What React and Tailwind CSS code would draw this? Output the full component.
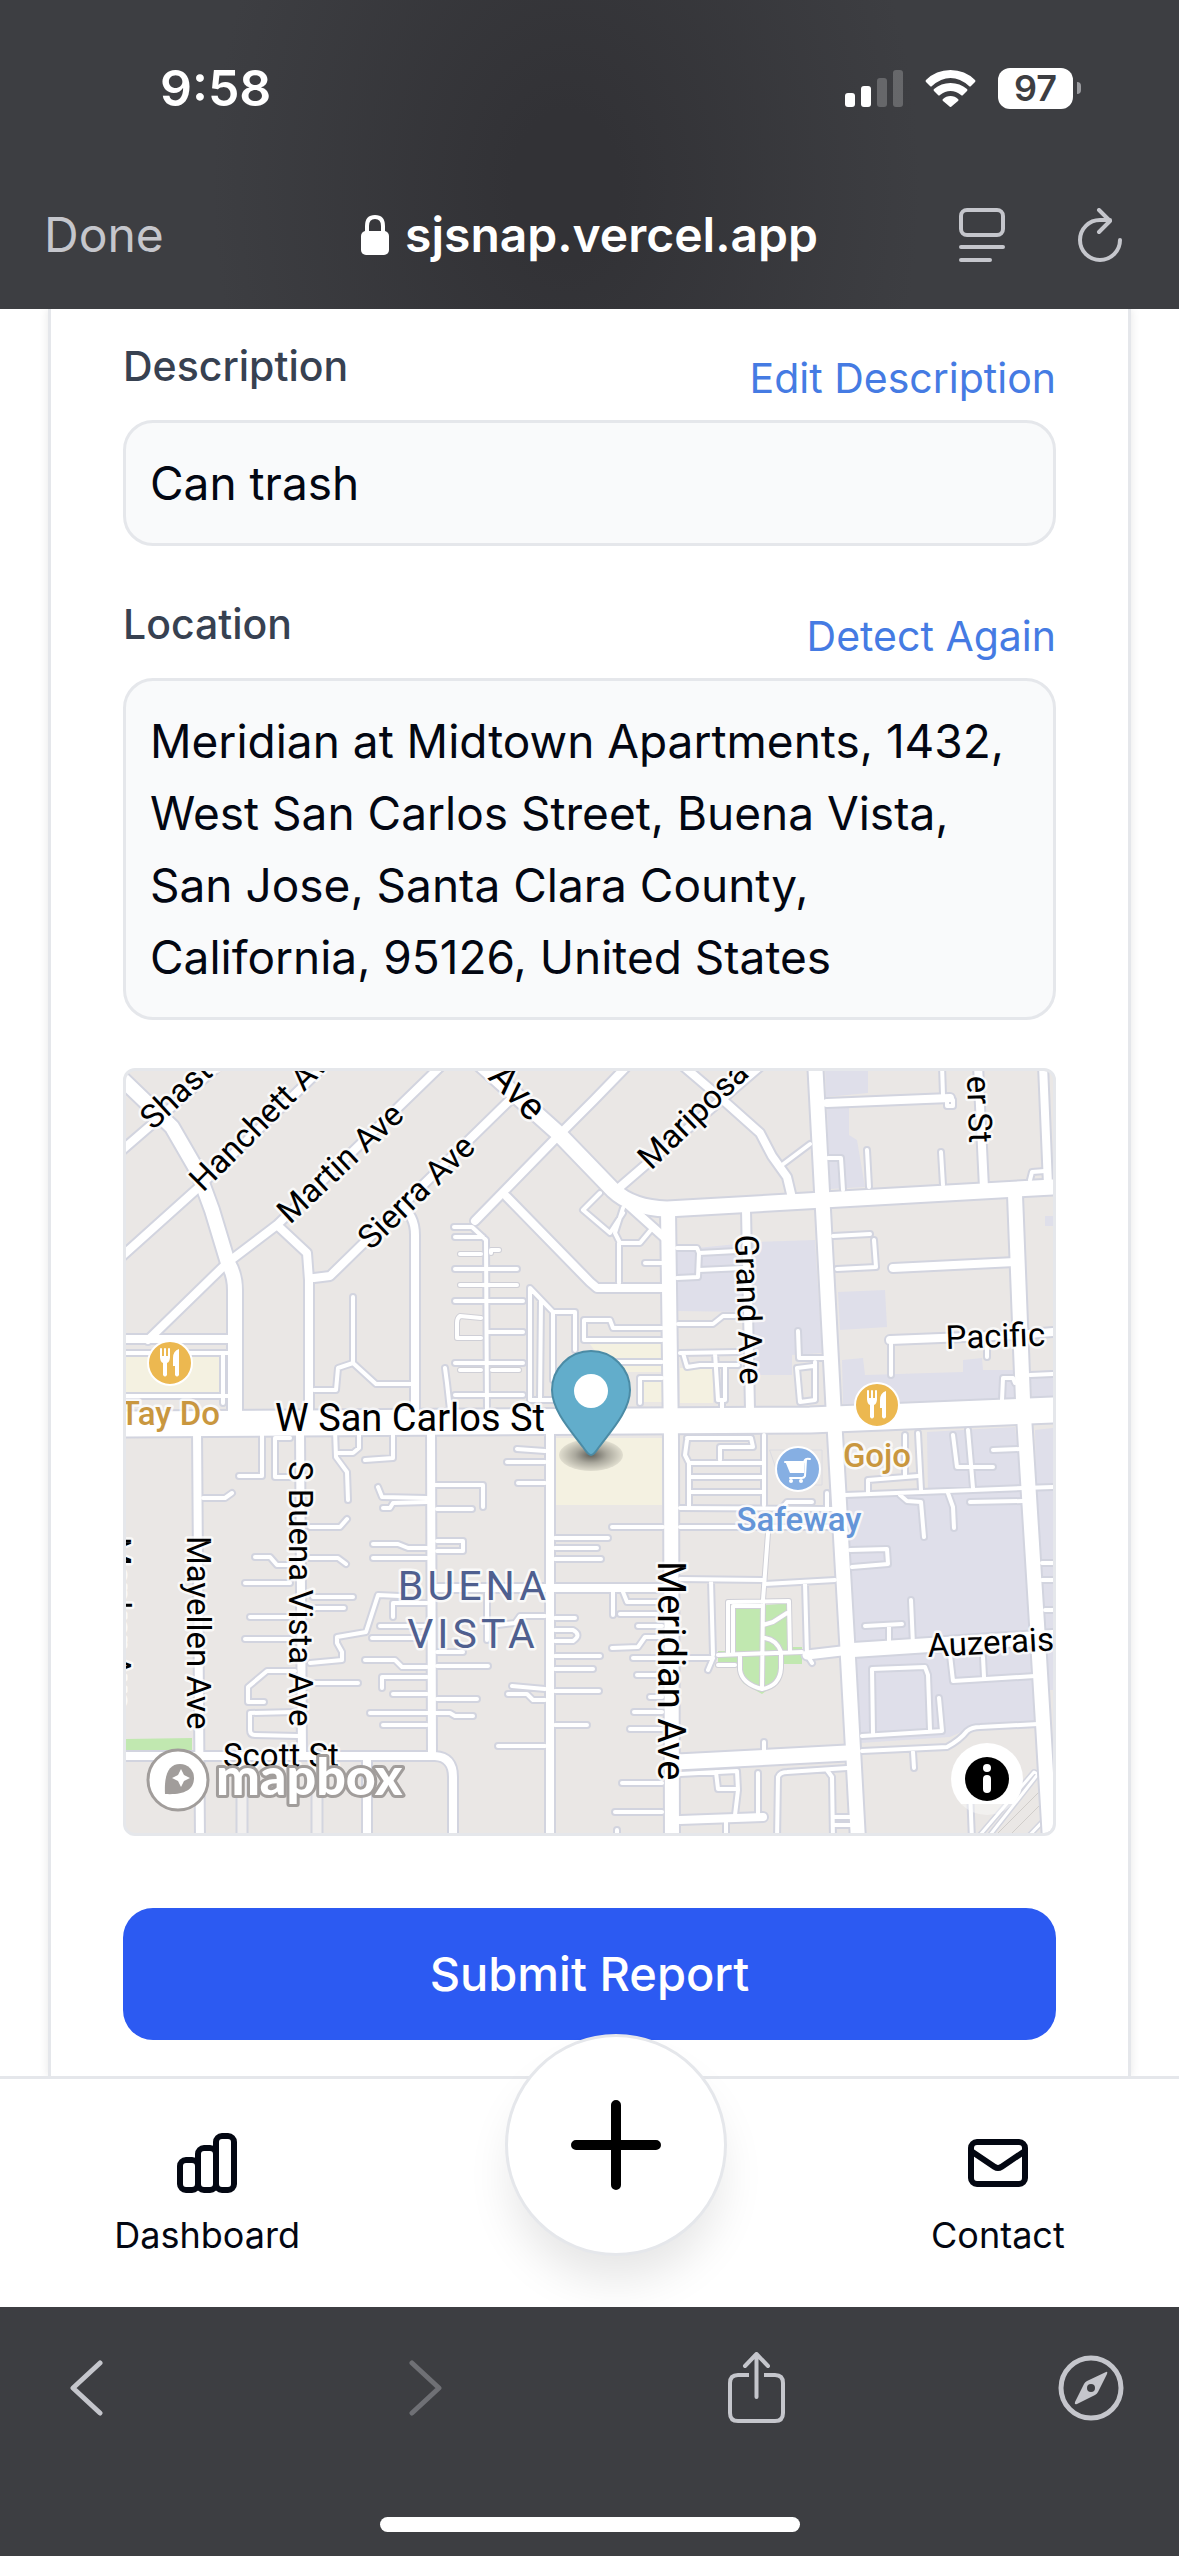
import React from 'react'

// Map geometry, all in the map's own viewBox units: [path, width]
const WIDE_ROADS = [
  ['M10 374L700 370L943 360', 25],
  ['M372 15L448 83L503 140Q522 158 557 159L713 150L943 137', 15],
  ['M705 10L713 160L724 367L737 590L748 790', 14],
  ['M558 160L561 390L562 790', 14],
  ['M905 145L913 350L928 590L940 790', 14],
  ['M10 27L62 77L88 122L102 160L118 213Q125 225 125 240V368', 14],
  ['M743 600L943 587', 14],
  ['M567 712L737 703', 15],
  ['M697 605L740 600', 9],
]

const STREETS = [
  'M10 102L40 76L115 10',
  'M10 208L88 138L215 15',
  'M38 290L117 213L167 175L335 12',
  'M167 175L197 203L199 230V368',
  'M204 228L220 226L405 45',
  'M290 155Q305 165 305 185V368',
  'M365 171L447 87L484 50L518 15',
  'M397 147L480 232L487 238H553',
  'M515 152L555 188',
  'M510 137L655 12',
  'M572 15L613 50L650 83L662 106L677 127L682 148',
  'M717 53L840 48',
  'M868 15L874 138',
  'M933 15L938 135',
  'M636 160L640 360',
  'M783 218L905 212',
  'M780 290L907 285L943 282',
  'M10 289H122',
  'M87 380L90 790',
  'M190 380L192 706',
  'M10 706H325Q343 707 343 727V790',
  'M321 380L322 706',
  'M440 380V790',
  'M257 706V790',
  'M323 538H560',
  'M570 770L653 767',
]

const LANES = [
  // north west
  'M10 303H118M113 303V353M10 346H118',
  'M243 247V313L266 334H302M204 340H226L228 318L243 313',
  'M344 177H362L376 190L377 362',
  'M345 187H373M345 219H407M345 251H413M377 282H413M345 313H413M345 345H413',
  'M420 350V238L443 262H465V300M431 250L430 350M443 262V330M420 350H444',
  'M335 318L337 333L340 360',
  'M474 270V290M474 270H484',
  // around the marker
  'M490 143L473 160L500 183L513 163M513 158L505 183L510 193H530L540 181M509 193V233M535 213H552',
  'M552 278H503L500 270H474V290H552M505 312H552M530 353V328H552',
  // Grand Ave
  'M567 198H587L589 203L588 227L567 228M589 203L627 201M589 220L633 218',
  'M568 274H603L613 266H625M570 303L628 302M573 303L577 317L590 315H628M605 303L608 350H615V317M612 350V360',
  'M688 281L689 308H716M687 318L690 352L705 350V312M687 318L703 316',
  'M672 115L700 94',
  // north east
  'M832 15L833 45M837 50V56H843V50M757 100L759 137M831 102L833 135M718 108H731L733 140',
  'M723 186L760 184M727 219L766 217L764 190M781 290V325M877 295V307',
  'M892 350L893 328L903 328L905 333M920 325L943 324M920 130L922 122L935 121',
  // west blocks
  'M129 426H152V385M165 388V427H180M165 388H180M93 448H115L122 443',
  'M225 380L226 407L237 422L238 450M227 403H243L249 398V385M255 410L283 408V385',
  'M200 477H230L237 469M200 508H228L236 514M135 533H180M203 547H243M203 558H234',
  'M140 567H180M135 589H180M185 621H157L138 637V652H154M203 633H248',
  'M200 613L232 610V602L227 593V587L256 582L268 545L290 546',
  'M185 662L140 663V680Q140 685 145 685L188 686',
  'M145 507H160L167 515H180',
  'M268 437L272 447L317 448M273 458H280L283 453L317 452M325 435H373V457M327 459H362',
  'M263 494H288L298 498H317M263 508H317M327 491H353V501H327',
  'M255 610H285L292 617H317M272 638V627H317M283 644H317M260 663H340L345 666H363',
  'M273 675H317M327 649H367M327 616H378M270 576H317M262 588H317M283 567V553H317',
  'M377 543V590M388 575L405 573L410 566H435M327 602H353',
  'M407 399L435 401M397 412H435M408 433H435M402 636L435 639M398 644H417L423 650H435M388 696H435',
  'M445 488H498M445 498H487M445 509H491M445 568H465M445 580H463Q472 585 463 591H445',
  'M445 606H490M445 619H483M445 641H489M445 675H477',
  // Meridian Ave side streets
  'M502 477H553M503 542V565M513 542L517 552H552M510 564H547M528 576H552M502 598L528 597L535 587H552',
  'M523 608H603L598 620M527 625H552M540 647H552M524 662H552M520 679H552M512 733H552M505 762H552M507 780V790',
  'M570 529L653 530M655 534L725 530M601 530L603 605M695 533L697 605L702 613',
  'M570 458L723 459M570 477H727M577 390L575 405L579 413V457M579 413H653M579 427H653M579 442H653',
  'M654 385V455M610 410V397H643L641 388H577M717 443V458M673 457L677 452H702',
  'M654 692V708M570 724L627 721L628 740L625 765M606 722L608 739H627M648 723V767M616 772V790',
  'M667 790L668 727Q670 722 677 722L737 718M717 720L722 727L723 790M725 767H742M725 775H742',
  // south east
  'M735 445L913 438L943 437M758 442V430L808 426M808 383L811 440M795 385V425',
  'M843 385L847 417H883M858 380L863 438M883 400L910 399M790 445L797 451L811 452L814 487',
  'M838 443L843 457L844 478M860 452L913 451M740 500L777 499L778 514L742 517',
  'M801 550L803 595M755 576L792 574M779 576V595',
  'M763 683L762 619L815 617L818 625L820 680M752 686L832 681L829 648',
  'M840 605L843 631L925 626M873 607L874 627M752 701L837 697Q850 690 857 681Q862 677 870 677L928 674',
  'M803 702L804 718M860 740L862 790M932 513H943M932 530H943M935 560H943',
]

const PATHS = [
  'M350 204H371M381 203V200H389M350 235H407M371 268L350 266Q347 268 347 273V288H371M350 320H371M382 320H409',
  'M658 483L653 550L652 638',
  'M608 605L692 602M608 615H625M618 603V552L679 551L680 602M623 603V556H652M653 575L663 572L677 563',
  'M630 605V620Q632 634 652 639Q670 636 671 618L671 602Q667 590 655 588',
]

const COMMERCIAL = [
  'M715 15H758V43L716 47Z',
  'M717 58H739V85L747 90L755 137L720 139Z',
  'M728 242L775 240L777 277L730 280Z',
  'M732 310L753 308L755 325L853 322V310L872 308L873 320L905 320L907 348L733 354Z',
  'M567 200L647 192L705 190L712 303L682 305V325H640V262L567 261Z',
  'M920 322L943 320V348L922 349Z',
  'M935 166H943V176H935Z',
  'M817 382L905 377L913 440L928 673L867 675L840 687L750 693L736 447L818 443Z',
  'M925 380L943 378V640L930 640Z',
]

const PARKS = [
  'M625 558L680 553V597H692V614H674L668 632L652 644L633 633L627 613H608V601H625Z',
  'M10 689L82 688V701H10Z',
]

const SANDY = ['M10 307H112V343H10Z', 'M445 388H552V455H445Z', 'M480 294H552V322H500Z', 'M534 332H552V352H534Z', 'M570 318H603V353H570Z']

const STREET_LABELS = [
  { text: 'Shasta Ave', x: 43, y: 81, angle: -43, size: 'text-[33px]' },
  { text: 'Hanchett Ave', x: 93, y: 143, angle: -45, size: 'text-[33px]' },
  { text: 'Martin Ave', x: 180, y: 175, angle: -43, size: 'text-[33px]' },
  { text: 'Sierra Ave', x: 261, y: 201, angle: -44, size: 'text-[33px]' },
  { text: 'Ave', x: 377, y: 28, angle: 46, size: 'text-[38px]' },
  { text: 'Mariposa Ave', x: 541, y: 121, angle: -44, size: 'text-[33px]' },
  { text: 'er St', x: 857, y: 26, angle: 88, size: 'text-[33px]' },
  { text: 'Grand Ave', x: 625, y: 185, angle: 88, size: 'text-[33px]' },
  { text: 'Pacific', x: 836, y: 299, angle: -2, size: 'text-[33px]' },
  { text: 'W San Carlos St', x: 165, y: 381, angle: 0, size: 'text-[38px]' },
  { text: 'S Buena Vista Ave', x: 179, y: 411, angle: 90, size: 'text-[33px]' },
  { text: 'Mayellen Ave', x: 77, y: 486, angle: 90, size: 'text-[33px]' },
  { text: 'Menker Ave', x: -3, y: 487, angle: 90, size: 'text-[33px]' },
  { text: 'Scott St', x: 113, y: 717, angle: 0, size: 'text-[33px]' },
  { text: 'Meridian Ave', x: 548, y: 511, angle: 90, size: 'text-[38px]' },
  { text: 'Auzerais', x: 818, y: 607, angle: -3, size: 'text-[33px]' },
]

const FoodPin = ({ x, y }) => (
  <g transform={`translate(${x} ${y})`}>
    <circle r="22" fill="#ecb850" stroke="#fff" strokeWidth="2" />
    <path d="M-9 -14V-6M-5 -14V-6M-1 -14V-6" stroke="#fff" strokeWidth="2" strokeLinecap="round" />
    <path d="M-10 -7H0Q0 -1 -3 0V12Q-5 15 -7 12V0Q-10 -1 -10 -7Z" fill="#fff" />
    <path d="M9 -14V12Q7 15 5 12V3H3V-5Q3 -12 9 -14Z" fill="#fff" />
  </g>
)

const CartPin = ({ x, y }) => (
  <g transform={`translate(${x} ${y})`}>
    <circle r="22" fill="#86afe3" stroke="#fff" strokeWidth="2" />
    <path d="M-13 -7H6L7 -9Q8 -11 12 -10" stroke="#fff" strokeWidth="2" fill="none" strokeLinecap="round" />
    <path d="M-13 -8H7L6 4H-8Z" fill="#fff" />
    <path d="M8 -9L7 7Q6 9 4 9H-8" stroke="#fff" strokeWidth="2" fill="none" strokeLinecap="round" />
    <circle cx="-7" cy="12" r="2" fill="#fff" />
    <circle cx="3" cy="12" r="2" fill="#fff" />
  </g>
)

const MapView = () => (
  <div className="relative mt-12 overflow-hidden rounded-xl border-3 border-[#e5e7eb] bg-[#eae7e5]">
    <svg viewBox="16 21 927 762" className="block h-auto w-full" role="img" aria-label="Map">
      <defs>
        <radialGradient id="pinShadow">
          <stop offset="0" stopColor="#000" stopOpacity="0.6" />
          <stop offset="0.5" stopColor="#000" stopOpacity="0.3" />
          <stop offset="1" stopColor="#000" stopOpacity="0.08" />
        </radialGradient>
      </defs>
      <path d={COMMERCIAL.join('')} fill="#dfdfea" />
      <path d={PARKS.join('')} fill="#c1e8b0" />
      <path d={SANDY.join('')} fill="#f4f1e1" />

      <g fill="none" strokeLinejoin="round" strokeLinecap="round">
        <path d="M132 706V790M207 706V790" stroke="#d3d5df" strokeWidth="13" />
        <path d="M132 706V790M207 706V790" stroke="#f1efee" strokeWidth="9" />
        <path d="M660 400H712V435H672Z" stroke="#dcdce2" strokeWidth="1" />
        <path d="M886 785L943 728M900 785L943 742" stroke="#d0cdca" strokeWidth="1" />
        <path d="M870 785L924 722L928 724L880 785M915 790L936 768" stroke="#d3d5df" strokeWidth="6" />
        <path d="M870 785L924 722L928 724L880 785M915 790L936 768" stroke="#fff" strokeWidth="3" />
        {/* casings go under every fill so that crossings stay open */}
        <path d={PATHS.join('')} stroke="#cfcfd6" strokeWidth="6" />
        <path d={LANES.join('')} stroke="#d2d4df" strokeWidth="8" />
        <path d={STREETS.join('')} stroke="#d2d4df" strokeWidth="12" />
        {WIDE_ROADS.map(([d, w]) => (
          <path key={d} d={d} stroke="#d2d4df" strokeWidth={w + 4} />
        ))}
        <path d={PATHS.join('')} stroke="#fff" strokeWidth="4" />
        <path d={LANES.join('')} stroke="#fff" strokeWidth="4" />
        <path d={STREETS.join('')} stroke="#fff" strokeWidth="8" />
        {WIDE_ROADS.map(([d, w]) => (
          <path key={d} d={d} stroke="#fff" strokeWidth={w} />
        ))}
      </g>

      <g className="font-['Roboto',sans-serif]" fill="#000" stroke="#fff" strokeOpacity="0.75" strokeWidth="5" strokeLinejoin="round" paintOrder="stroke">
        {STREET_LABELS.map(({ text, x, y, angle, size }) => (
          <text key={text} className={size} transform={`translate(${x} ${y}) rotate(${angle})`}>
            {text}
          </text>
        ))}
        <g className="text-[41px] tracking-widest" fill="#4f5f8f" textAnchor="middle">
          <text x="364" y="550">BUENA</text>
          <text x="363" y="598">VISTA</text>
        </g>
        <g className="text-[33px] font-medium">
          <text x="110" y="375" textAnchor="end" fill="#c9973f">Tay Do</text>
          <text x="767" y="417" textAnchor="middle" fill="#c9973f">Gojo</text>
          <text x="689" y="481" textAnchor="middle" fill="#6495d8">Safeway</text>
        </g>
      </g>

      <FoodPin x={60} y={313} />
      <FoodPin x={767} y={355} />
      <CartPin x={688} y={419} />

      <g>
        <circle cx="68" cy="730" r="30" fill="#fff" stroke="#a19d9b" strokeWidth="3" />
        <path d="M55 744C54 726 58 714 70 714A14 14 0 0 1 84 728C84 741 72 745 55 744Z" fill="#a19d9b" />
        <path d="M71 719L74 725L80 728L74 731L71 737L68 731L62 728L68 725Z" fill="#fff" />
        <text x="106" y="745" className="font-['Lato',sans-serif] text-[52px] font-black" fill="#fff" stroke="#a19d9b" strokeWidth="6" strokeLinejoin="round" paintOrder="stroke">mapbox</text>
      </g>

      <ellipse cx="481" cy="405" rx="32" ry="16" fill="url(#pinShadow)" />
      <path
        d="M481 405C478 405 476 401 473 397C462 382 442 361 442 340A39 39 0 0 1 520 340C520 361 500 382 489 397C486 401 484 405 481 405Z"
        fill="#62adcb"
        stroke="#4b8ba5"
        strokeWidth="2"
      />
      <circle cx="481" cy="341" r="17" fill="#fff" />
    </svg>
    <button
      className="absolute right-[30px] bottom-[18px] flex size-18 items-center justify-center rounded-full bg-linear-to-b from-white from-85% to-white/40 to-85%"
      aria-label="Toggle attribution"
    >
      <svg viewBox="0 0 44 44" className="size-11">
        <circle cx="22" cy="22" r="22" fill="#000" />
        <circle cx="22" cy="11" r="4" fill="#fff" />
        <path d="M22 22V32" stroke="#fff" strokeWidth="8" strokeLinecap="round" />
      </svg>
    </button>
  </div>
)

const StatusBar = () => (
  <div className="flex h-44 items-center justify-between pr-[98px] pl-40 text-white">
    <span className="text-[50px] font-semibold">9:58</span>
    <div className="flex items-center gap-[22px]">
      <svg viewBox="0 0 58 37" className="h-[37px] w-[58px]" fill="#fff">
        <rect x="0" y="23" width="10" height="14" rx="3" />
        <rect x="16" y="16" width="10" height="21" rx="3" />
        <rect x="32" y="8" width="10" height="29" rx="3" opacity="0.22" />
        <rect x="48" y="0" width="10" height="37" rx="3" opacity="0.22" />
      </svg>
      <svg viewBox="0 0 51 37" className="h-[37px] w-[51px]" fill="#fff">
        <path d="M1 10Q0 11 1 12L5 16Q6 17 7 16Q16 8 25.500 8T44 16Q45 17 46 16L50 12Q51 11 50 10Q40 0 25.500 0T1 10Z" />
        <path d="M9 19Q8 20 9 21L13 25Q14 26 15 25Q20 21 25.500 21T36 25Q37 26 38 25L42 21Q43 20 42 19Q35 13 25.500 13T9 19Z" />
        <path d="M18 29Q17 30 18 31L24 36Q25.500 38 27 36L33 31Q34 30 33 29Q30 26 25.500 26T18 29Z" />
      </svg>
      <div className="flex items-center gap-1">
        <span className="flex h-[41px] w-[75px] items-center justify-center rounded-xl bg-white text-[36px] font-semibold text-[#3d3e42]">97</span>
        <span className="h-3 w-1 rounded-r-full bg-[#9b9ca0]" />
      </div>
    </div>
  </div>
)

const AddressBar = () => (
  <div className="grid h-[118px] grid-cols-[1fr_auto_1fr] items-center px-11 text-[#c5c6cc]">
    <button className="justify-self-start text-[48px]">Done</button>
    <div className="flex items-center gap-4 text-white">
      <svg viewBox="0 0 28 40" className="h-10 w-7">
        <rect x="0" y="16" width="28" height="24" rx="5" fill="#fff" />
        <path d="M6 18V11Q6 2 14 2T22 11V18" fill="none" stroke="#fff" strokeWidth="4" />
      </svg>
      <span className="text-[48px] font-semibold">sjsnap.vercel.app</span>
    </div>
    <div className="flex items-center gap-18 justify-self-end pr-3">
      <button aria-label="Reader">
        <svg viewBox="0 0 46 54" className="h-[54px] w-[46px]" fill="none" stroke="currentColor" strokeWidth="4" strokeLinecap="round">
          <rect x="2" y="2" width="42" height="25" rx="6" />
          <path d="M2 39H44M2 52H31" />
        </svg>
      </button>
      <button aria-label="Reload">
        <svg viewBox="0 0 46 54" className="h-[54px] w-[46px]" fill="none" stroke="currentColor" strokeWidth="4" strokeLinecap="round" strokeLinejoin="round">
          <path d="M43 32A20 20 0 1 1 23 12H33M22 2L33 13L22 24" />
        </svg>
      </button>
    </div>
  </div>
)

const Field = ({ label, action, children }) => (
  <div>
    <div className="flex items-center justify-between">
      <span className="mb-6 text-[41px] leading-[60px] font-medium text-[#374151]">{label}</span>
      <button className="text-[41px] leading-[60px] text-[#457be3]">{action}</button>
    </div>
    <p className="rounded-[30px] border-3 border-[#e5e7eb] bg-[#f9fafb] p-6 text-[46px] leading-[72px] text-[#030712]">{children}</p>
  </div>
)

const TabBar = () => (
  <nav className="relative flex h-[231px] items-center justify-around border-t-3 border-[#e5e7eb] bg-white px-3 text-[#030712]">
    <a href="#dashboard" className="flex flex-col items-center gap-3">
      <svg viewBox="0 0 24 24" className="size-18" fill="none" stroke="currentColor" strokeWidth="2">
        <rect x="3" y="11" width="6" height="10" rx="2" />
        <rect x="9" y="7" width="6" height="14" rx="2" />
        <rect x="15" y="3" width="6" height="18" rx="2" />
      </svg>
      <span className="text-[36px] leading-[48px]">Dashboard</span>
    </a>
    <button className="-mt-24 flex size-[222px] items-center justify-center rounded-full border-3 border-[#e5e7eb] bg-white shadow-[0_30px_45px_-6px_rgba(0,0,0,0.1)]" aria-label="New report">
      <svg viewBox="0 0 90 90" className="size-[90px]" stroke="#000" strokeWidth="10" strokeLinecap="round">
        <path d="M45 5V85M5 45H85" />
      </svg>
    </button>
    <a href="#contact" className="flex flex-col items-center gap-3">
      <svg viewBox="0 0 24 24" className="size-18" fill="none" stroke="currentColor" strokeWidth="2" strokeLinejoin="round">
        <rect x="3" y="5" width="18" height="14" rx="2" />
        <path d="M3 8L10.900 13.300Q12 14 13.100 13.300L21 8" />
      </svg>
      <span className="text-[36px] leading-[48px]">Contact</span>
    </a>
  </nav>
)

const BrowserToolbar = () => (
  <footer className="relative bg-[#3d3e42] text-[#c5c6cc]">
    <div className="flex h-[162px] items-center justify-between px-[52px]">
      <button aria-label="Back" className="flex w-18 justify-center">
        <svg viewBox="0 0 40 56" className="h-14 w-10" fill="none" stroke="currentColor" strokeWidth="5" strokeLinecap="round" strokeLinejoin="round">
          <path d="M32 3L5 28L32 53" />
        </svg>
      </button>
      <button aria-label="Forward" className="flex w-18 justify-center text-[#6f7075]">
        <svg viewBox="0 0 40 56" className="h-14 w-10" fill="none" stroke="currentColor" strokeWidth="5" strokeLinecap="round" strokeLinejoin="round">
          <path d="M10 3L37 28L10 53" />
        </svg>
      </button>
      <button aria-label="Share" className="flex w-18 justify-center">
        <svg viewBox="0 0 58 72" className="h-18 w-[58px]" fill="none" stroke="currentColor" strokeWidth="4" strokeLinejoin="round">
          <path d="M21 23H10Q2 23 2 31V61Q2 69 10 69H47Q55 69 55 61V31Q55 23 47 23H36" />
          <path d="M28.500 45V3M17 14L28.500 2L40 14" strokeLinecap="round" />
        </svg>
      </button>
      <button aria-label="Open in Safari" className="flex w-18 justify-center">
        <svg viewBox="0 0 66 66" className="size-[66px]">
          <circle cx="33" cy="33" r="30" fill="none" stroke="currentColor" strokeWidth="5" />
          <path d="M48 17Q50 16 49 19L40 37Q39 39 37 40L19 49Q16 50 17 47L26 29Q27 27 29 26Z" fill="currentColor" />
          <circle cx="33" cy="33" r="4" fill="#3d3e42" />
        </svg>
      </button>
    </div>
    <div className="flex h-[87px] items-end justify-center pb-6">
      <span className="h-[15px] w-[420px] rounded-full bg-white" />
    </div>
  </footer>
)

const App = () => (
  <div className="bg-white font-['Inter',sans-serif]">
    <header className="relative bg-[radial-gradient(ellipse_30%_160%_at_48%_60%,#323236_15%,#3d3e42)] pb-[15px]">
      <StatusBar />
      <AddressBar />
    </header>
    <main className="px-12">
      <section className="flex flex-col border-x-3 border-[#e5e7eb] px-18 pt-[27px] pb-9 shadow-[0_0_9px_rgba(0,0,0,0.1)]">
        <div className="flex flex-col gap-12">
          <Field label="Description" action="Edit Description">Can trash</Field>
          <Field label="Location" action="Detect Again">
            Meridian at Midtown Apartments, 1432, West San Carlos Street, Buena Vista, San Jose, Santa Clara County, California, 95126, United States
          </Field>
        </div>
        <MapView />
        <button className="mt-18 rounded-[30px] bg-[#2c5af2] py-[30px] text-[47px] leading-[72px] font-medium text-white">Submit Report</button>
      </section>
    </main>
    <TabBar />
    <BrowserToolbar />
  </div>
)

export default App
